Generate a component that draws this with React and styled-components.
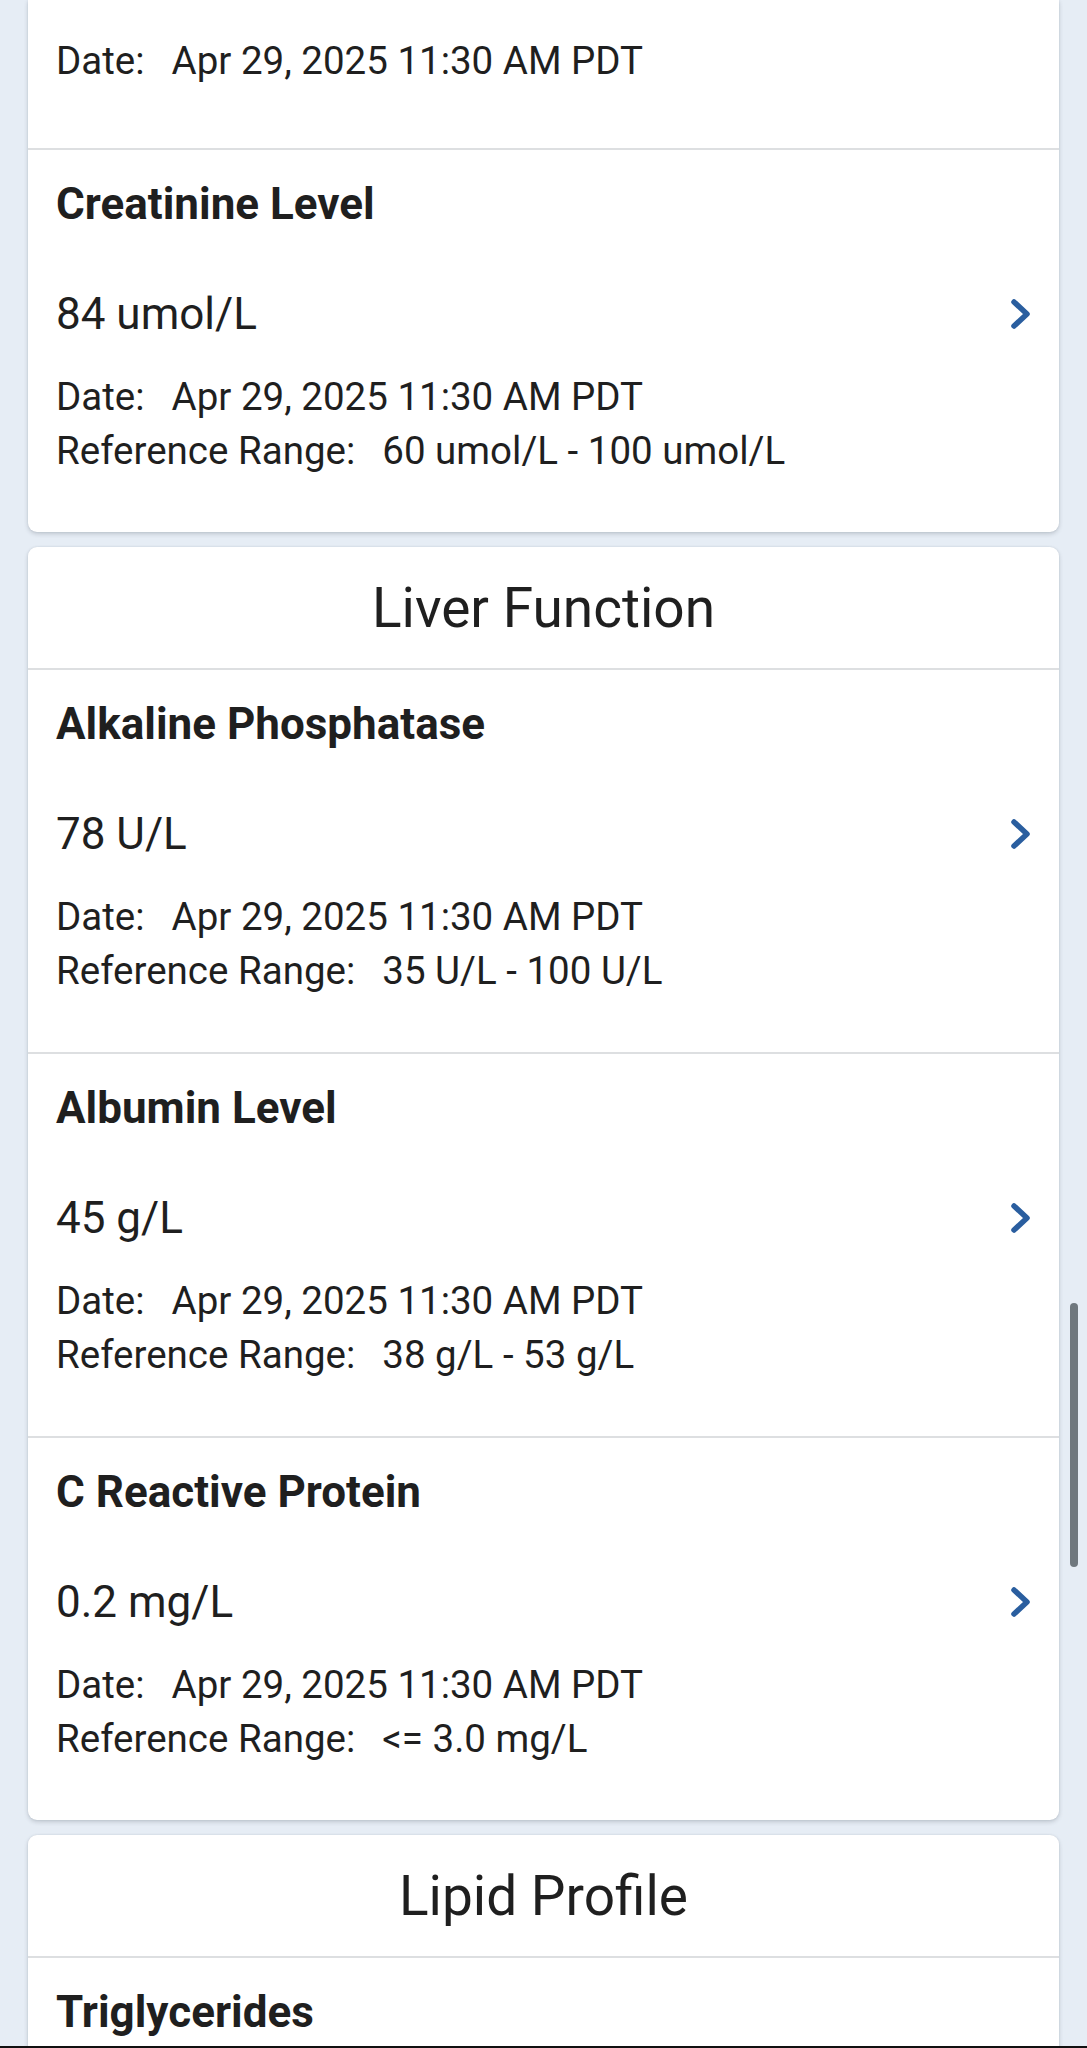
import React from "react";
import styled, { createGlobalStyle } from "styled-components";

const GlobalStyle = createGlobalStyle`
  html, body {
    margin: 0;
    padding: 0;
    background: #e6edf5;
    font-family: Roboto, "Noto Sans", "Liberation Sans", sans-serif;
    color: #1f1f1f;
  }
`;

const sections = [
  {
    name: "Liver Function",
    results: [
      { title: "Alkaline Phosphatase", value: "78 U/L", range: "35 U/L - 100 U/L" },
      { title: "Albumin Level", value: "45 g/L", range: "38 g/L - 53 g/L" },
      { title: "C Reactive Protein", value: "0.2 mg/L", range: "<= 3.0 mg/L" },
    ],
  },
  {
    name: "Lipid Profile",
    results: [{ title: "Triglycerides" }],
  },
];

const DATE = "Apr 29, 2025 11:30 AM PDT";

function Chevron() {
  return (
    <svg width="22" height="32" viewBox="0 0 22 32" fill="none">
      <path
        d="M4 4 L17 16 L4 28"
        stroke="#2a5e9f"
        strokeWidth="5.5"
        strokeLinecap="round"
        strokeLinejoin="round"
      />
    </svg>
  );
}

function Detail({ label, children }) {
  return (
    <Line>
      <span>{label}</span>
      <Val>{children}</Val>
    </Line>
  );
}

function Result({ title, value, range }) {
  return (
    <Item>
      <Title>{title}</Title>
      {value && (
        <>
          <ValueRow>
            <Value>{value}</Value>
            <Chevron />
          </ValueRow>
          <Details>
            <Detail label="Date:">{DATE}</Detail>
            {range && <Detail label="Reference Range:">{range}</Detail>}
          </Details>
        </>
      )}
    </Item>
  );
}

export default function App() {
  return (
    <Screen>
      <GlobalStyle />
      <Content>
        <Card $clipped>
          <Tail>
            <Detail label="Date:">{DATE}</Detail>
          </Tail>
          <Result
            title="Creatinine Level"
            value="84 umol/L"
            range="60 umol/L - 100 umol/L"
          />
        </Card>
        {sections.map((s) => (
          <Card key={s.name}>
            <Header>{s.name}</Header>
            {s.results.map((r) => (
              <Result key={r.title} {...r} />
            ))}
          </Card>
        ))}
      </Content>
      <NavEdge />
      <Scrollbar />
    </Screen>
  );
}

const Screen = styled.div`
  position: relative;
  height: 2048px;
  display: flex;
  flex-direction: column;
  overflow: hidden;
`;

const Content = styled.div`
  flex: 1;
  overflow: hidden;
  padding: 0 28px;
  display: flex;
  flex-direction: column;
  gap: 15px;
`;

const Card = styled.div`
  background: #fff;
  border-radius: ${(p) => (p.$clipped ? "0 0 9px 9px" : "9px")};
  box-shadow: 0 2px 4px rgba(60, 70, 80, 0.22), 0 0 2px rgba(60, 70, 80, 0.12);
  flex-shrink: 0;
  & > * + * {
    border-top: 2px solid #dddfe1;
  }
`;

const Header = styled.div`
  height: 121px;
  display: flex;
  align-items: center;
  justify-content: center;
  font-size: 55px;
  font-weight: 400;
  color: #1f1f1f;
`;

const Item = styled.div`
  padding: 28px 28px 54px 28px;
`;

const Tail = styled.div`
  padding: 34px 28px 60px 28px;
`;

const Title = styled.div`
  font-size: 44px;
  line-height: 52px;
  font-weight: 700;
  color: #1f1f1f;
`;

const ValueRow = styled.div`
  margin-top: 58px;
  display: flex;
  align-items: center;
  justify-content: space-between;
  height: 52px;
  & > svg {
    margin-right: -1px;
  }
`;

const Value = styled.div`
  font-size: 44px;
  line-height: 52px;
  color: #1f1f1f;
`;

const Details = styled.div`
  margin-top: 30px;
`;

const Line = styled.div`
  font-size: 38.5px;
  line-height: 54px;
  color: #1f1f1f;
  white-space: nowrap;
`;

const Val = styled.span`
  margin-left: 27px;
`;

const NavEdge = styled.div`
  height: 2px;
  background: #111;
  flex-shrink: 0;
`;

const Scrollbar = styled.div`
  position: absolute;
  left: 1070px;
  top: 1303px;
  width: 8px;
  height: 264px;
  border-radius: 4px;
  background: #6f787e;
`;
